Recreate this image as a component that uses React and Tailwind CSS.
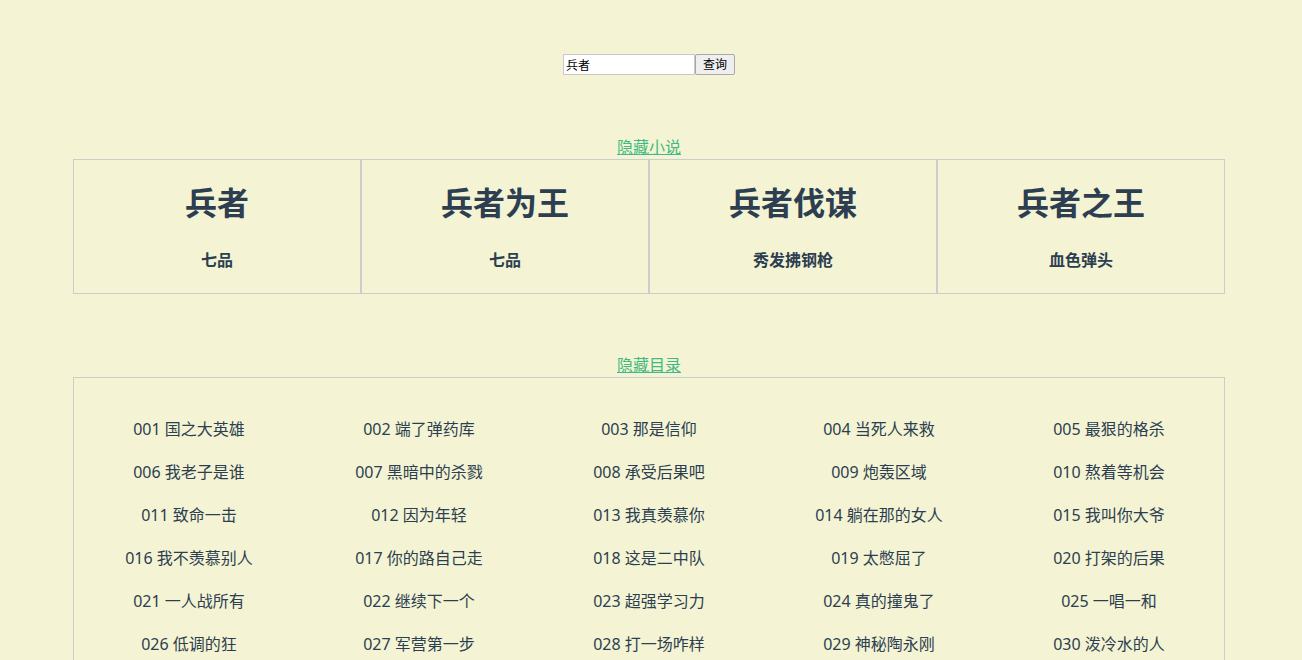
import React from 'react';

const novels = [
  { title: '兵者', author: '七品' },
  { title: '兵者为王', author: '七品' },
  { title: '兵者伐谋', author: '秀发拂钢枪' },
  { title: '兵者之王', author: '血色弹头' },
];

const chapters = [
  '001 国之大英雄', '002 端了弹药库', '003 那是信仰', '004 当死人来救', '005 最狠的格杀',
  '006 我老子是谁', '007 黑暗中的杀戮', '008 承受后果吧', '009 炮轰区域', '010 熬着等机会',
  '011 致命一击', '012 因为年轻', '013 我真羡慕你', '014 躺在那的女人', '015 我叫你大爷',
  '016 我不羡慕别人', '017 你的路自己走', '018 这是二中队', '019 太憋屈了', '020 打架的后果',
  '021 一人战所有', '022 继续下一个', '023 超强学习力', '024 真的撞鬼了', '025 一唱一和',
  '026 低调的狂', '027 军营第一步', '028 打一场咋样', '029 神秘陶永刚', '030 泼冷水的人',
  '031 新兵连', '032 第一次集合', '033 老兵', '034 内务', '035 熄灯号',
];

export default function App() {
  return (
    <div
      className="min-h-screen bg-[#f4f4d4] text-[#2c3e50]"
      style={{ fontFamily: '"Noto Sans", "Noto Sans CJK SC", sans-serif' }}
    >
      <div className="w-[1298px] pt-[54px] pb-10 flex flex-col items-center">
        {/* search */}
        <div className="flex items-center h-[21px]">
          <input
            defaultValue="兵者"
            className="w-[132px] h-[21px] px-[2px] border border-[#c8c8c8] bg-white text-[12px] text-black outline-none"
          />
          <button className="h-[21px] w-[40px] border border-[#a8a8a8] bg-[#efefef] text-[12px] text-black rounded-[2px]">
            查询
          </button>
        </div>

        {/* novels */}
        <a className="mt-[61px] block text-[16px] leading-[22px] text-[#42b983] underline cursor-pointer">
          隐藏小说
        </a>
        <div className="mt-[1px] w-[1152px] grid grid-cols-4">
          {novels.map((n, i) => (
            <div
              key={i}
              className="h-[135px] border border-[#cccccc] flex flex-col items-center pt-[23px]"
            >
              <h3 className="text-[32px] leading-[40px] font-bold">{n.title}</h3>
              <p className="mt-[26px] text-[16px] leading-[22px] font-bold">{n.author}</p>
            </div>
          ))}
        </div>

        {/* chapters */}
        <a className="mt-[60px] block text-[16px] leading-[22px] text-[#42b983] underline cursor-pointer">
          隐藏目录
        </a>
        <div className="mt-[1px] w-[1152px] border border-[#cccccc] pt-[29px] pb-[30px] grid grid-cols-5">
          {chapters.map((c, i) => (
            <div key={i} className="h-[43px] flex items-center justify-center text-[16px]">
              {c}
            </div>
          ))}
        </div>
      </div>
    </div>
  );
}
